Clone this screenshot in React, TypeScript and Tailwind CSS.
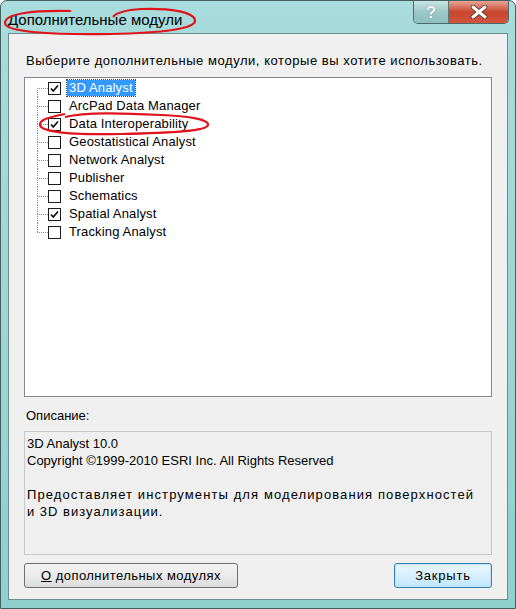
import React from 'react';

const modules = [
  { name: '3D Analyst', checked: true, selected: true },
  { name: 'ArcPad Data Manager', checked: false },
  { name: 'Data Interoperability', checked: true },
  { name: 'Geostatistical Analyst', checked: false },
  { name: 'Network Analyst', checked: false },
  { name: 'Publisher', checked: false },
  { name: 'Schematics', checked: false },
  { name: 'Spatial Analyst', checked: true },
  { name: 'Tracking Analyst', checked: false },
];

const CheckBox: React.FC<{ checked: boolean }> = ({ checked }) => (
  <div className="w-[13px] h-[13px] border border-[#1c1c1c] bg-white flex items-center justify-center shrink-0">
    {checked && (
      <svg width="9" height="9" viewBox="0 0 9 9">
        <path d="M1 4.5 L3.3 7 L8 1.5" stroke="#111" strokeWidth="1.8" fill="none" />
      </svg>
    )}
  </div>
);

export default function App() {
  return (
    <div
      className="relative w-[516px] h-[609px] overflow-hidden rounded-t-[7px] border border-[#41605f] bg-gradient-to-b from-[#a9dcdc] via-[#9ed6d4] to-[#8fd0cf] flex flex-col"
      style={{ fontFamily: '"Liberation Sans", Arial, sans-serif' }}
    >
      {/* title bar */}
      <div className="h-[32px] shrink-0 flex items-start relative">
        <div className="pl-[7px] pt-[10px] text-[15px] leading-[18px] text-black">Дополнительные модули</div>
        <div className="ml-auto mr-[6px] flex h-[23px] rounded-b-[5px] border border-t-0 border-[#4d6a6a] overflow-hidden">
          <div className="w-[35px] h-full flex items-center justify-center bg-gradient-to-b from-[#c9e4e4] via-[#9cc8c8] to-[#8ebfbf] border-r border-[#5a7a7a] text-white text-[17px] font-bold leading-none [text-shadow:0_0_1px_#365656]">
            ?
          </div>
          <div className="w-[59px] h-full flex items-center justify-center bg-gradient-to-b from-[#e8a595] via-[#c8462e] to-[#d3553b]">
            <svg width="18" height="14" viewBox="0 0 18 14">
              <path d="M3 2 L15 12 M15 2 L3 12" stroke="#4a2a22" strokeWidth="4.5" strokeLinecap="round" />
              <path d="M3 2 L15 12 M15 2 L3 12" stroke="#fff" strokeWidth="3" strokeLinecap="round" />
            </svg>
          </div>
        </div>
      </div>

      {/* client area */}
      <div className="mx-[7px] mb-[8px] flex-1 border border-[#6d8c8c] bg-[#f0f0f0] flex flex-col px-[15px] text-[13px] leading-[17px] text-black">
        <div className="mt-[18px] pl-[2px] tracking-[0.55px]">Выберите дополнительные модули, которые вы хотите использовать.</div>
        <div className="mt-[8px] h-[320px] border border-[#828790] bg-white pt-[1px] pl-[12px]">
          {modules.map((m, i) => (
            <div key={m.name} className="flex items-stretch h-[18px]">
              <div className="w-[11px] flex flex-col shrink-0">
                <div className={`flex-1 ${i === 0 ? '' : 'border-l border-dotted border-[#8a8a8a]'}`} />
                <div className={`flex-1 border-t border-dotted border-[#8a8a8a] ${i === modules.length - 1 ? '' : 'border-l'}`} />
              </div>
              <div className="flex items-center">
                <CheckBox checked={m.checked} />
                <span
                  className={`ml-[6px] px-[2px] leading-[16px] tracking-[0.15px] ${
                    m.selected ? 'bg-[#3399ff] text-white outline outline-1 outline-dotted outline-[#1b4a80]' : ''
                  }`}
                >
                  {m.name}
                </span>
              </div>
            </div>
          ))}
        </div>
        <div className="mt-[10px] pl-[2px]">Описание:</div>
        <div className="mt-[7px] h-[124px] border border-[#c8c8c8] bg-[#efefef] pl-[2px] pt-[3px] leading-[17px]">
          <div>3D Analyst 10.0</div>
          <div>Copyright ©1999-2010 ESRI Inc. All Rights Reserved</div>
          <div className="h-[17px]" />
          <div className="tracking-[1.1px]">Предоставляет инструменты для моделирования поверхностей</div>
          <div className="tracking-[1px]">и 3D визуализации.</div>
        </div>
        <div className="mt-[8px] flex justify-between">
          <button className="w-[214px] h-[25px] rounded-[3px] border border-[#707070] bg-gradient-to-b from-[#f2f2f2] via-[#ebebeb] to-[#dcdcdc] text-[13px] tracking-[0.45px]">
            <span className="underline">О</span> дополнительных модулях
          </button>
          <button className="w-[98px] h-[25px] rounded-[3px] border border-[#3c7fb1] bg-gradient-to-b from-[#eaf6fd] via-[#d9f0fc] to-[#bee6fd] text-[13px] tracking-[0.8px] shadow-[inset_0_0_0_1px_#bfe3f7]">
            Закрыть
          </button>
        </div>
      </div>

      {/* red annotation marks */}
      <svg className="absolute left-0 top-0 pointer-events-none" width="516" height="609">
        <path
          d="M70 10 C 30 9, 4 13, 4 22 C 4 31, 50 34, 110 33 C 160 32, 196 28, 194 19 C 192 11, 170 7, 140 8 C 125 9, 115 12, 112 16"
          stroke="#e0141e"
          strokeWidth="2.2"
          fill="none"
        />
        <path
          d="M64 113 C 48 116, 38 119, 39 124 C 40 131, 70 134, 120 133 C 170 132, 206 130, 207 124 C 208 118, 185 115, 160 114 C 120 112, 85 111, 64 116"
          stroke="#e0141e"
          strokeWidth="2.2"
          fill="none"
        />
      </svg>
    </div>
  );
}
